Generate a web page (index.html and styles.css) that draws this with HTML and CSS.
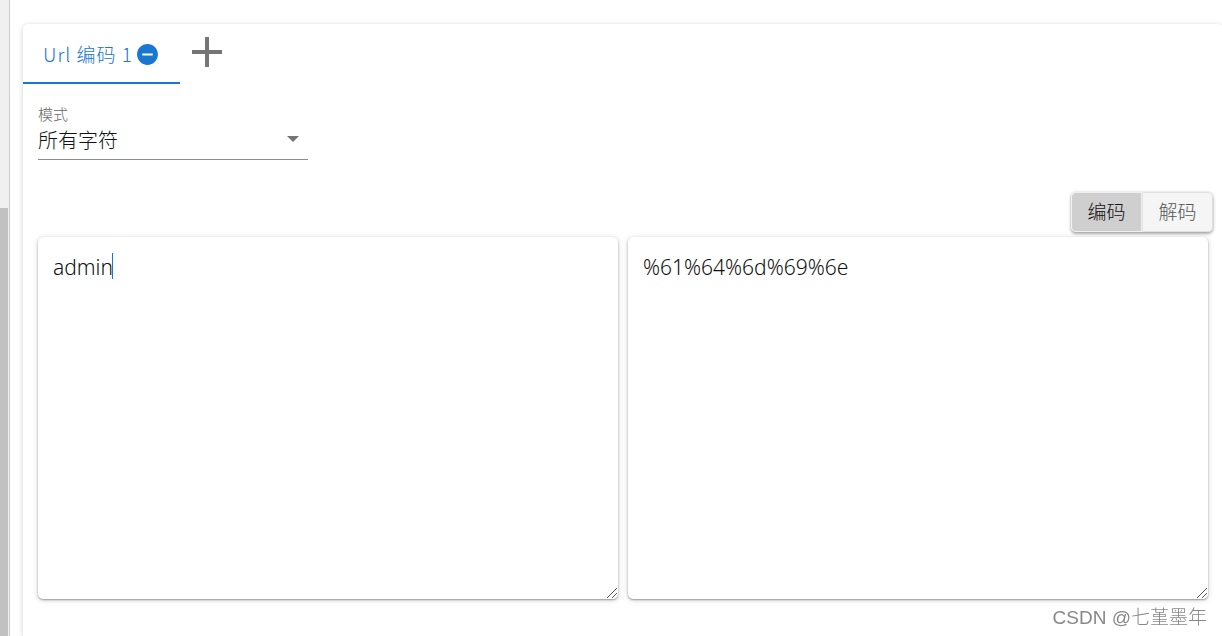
FILE: index.html
```
<!DOCTYPE html>
<html lang="zh-CN">
<head>
    <meta charset="UTF-8">
    <meta name="viewport" content="width=device-width, initial-scale=1.0">
    <title>Url 编码</title>
    <link rel="stylesheet" href="styles.css">
</head>
<body>
    <div class="page">
        <div class="scrollbar">
            <div class="scrollbar-thumb"></div>
        </div>

        <main class="card">
            <!-- Tabs -->
            <div class="tab-bar">
                <div class="tab active">
                    <button type="button" class="tab-label">Url 编码 1</button>
                    <button type="button" class="icon-button" aria-label="关闭">
                        <svg width="25" height="25" viewBox="0 0 24 24"><path fill="#1976d2" d="M12 2C6.48 2 2 6.48 2 12s4.480 10 10 10 10-4.480 10-10S17.520 2 12 2zm5 11H7v-2h10v2z"/></svg>
                    </button>
                </div>
                <button type="button" class="icon-button add-tab" aria-label="添加">
                    <svg width="30" height="30" viewBox="0 0 30 30"><path fill="#757575" d="M13 0h4v13h13v4H17v13h-4V17H0v-4h13z"/></svg>
                </button>
            </div>

            <div class="content">
                <!-- Mode -->
                <div class="field">
                    <label for="mode">模式</label>
                    <div class="select-wrap">
                        <select id="mode" name="mode">
                            <option value="all">所有字符</option>
                        </select>
                        <svg class="arrow" width="12" height="6" viewBox="0 0 12 6"><path fill="#757575" d="M0 0h12L6 6z"/></svg>
                    </div>
                </div>

                <!-- Encode / decode -->
                <div class="toggle-group">
                    <button type="button" class="toggle selected" aria-pressed="true">编码</button>
                    <button type="button" class="toggle" aria-pressed="false">解码</button>
                </div>

                <!-- Input and output -->
                <div class="panels">
                    <div class="panel">
                        <textarea aria-label="输入" spellcheck="false">admin</textarea>
                        <span class="caret"></span>
                        <svg class="grip" width="10" height="10" viewBox="0 0 10 10"><path stroke="#555" d="M0 10L10 0M5 10l5-5"/></svg>
                    </div>
                    <div class="panel">
                        <textarea aria-label="输出" spellcheck="false" readonly>%61%64%6d%69%6e</textarea>
                        <svg class="grip" width="10" height="10" viewBox="0 0 10 10"><path stroke="#555" d="M0 10L10 0M5 10l5-5"/></svg>
                    </div>
                </div>
            </div>
        </main>
    </div>
    <div class="watermark">CSDN @七堇墨年</div>
</body>
</html>
```
FILE: styles.css
```
* { box-sizing: border-box; }
body { margin: 0; overflow: hidden; background-color: #fff; color: #111; font-family: "Noto Sans", "Noto Sans CJK SC", sans-serif; font-weight: 300; }
button, select, textarea { margin: 0; padding: 0; border: none; background: none; color: inherit; font: inherit; }
button { cursor: pointer; }
svg { display: block; }

.page { display: flex; height: 100vh; }
.scrollbar { width: 10px; padding-right: 1px; padding-top: 208px; flex-shrink: 0; background-color: #f0f0f0; border-right: 1px solid #ccc; }
.scrollbar-thumb { width: 8px; height: 100%; background-color: #c1c1c1; }

.card { flex: 1; margin: 24px 0 0 13px; margin-right: -1px; border-radius: 5px 5px 0 0; background-color: #fff; box-shadow: 0 1px 5px rgba(0, 0, 0, 0.2); }

.tab-bar { display: flex; height: 60px; }
.tab { display: flex; align-items: center; gap: 2px; padding: 2px 20px 0; border-bottom: 2px solid transparent; }
.tab.active { color: #1976d2; border-color: #1976d2; }
.tab-label { font-family: "Noto Sans CJK SC", sans-serif; font-size: 19px; letter-spacing: 1px; line-height: 28px; white-space: nowrap; }
.icon-button { display: flex; align-items: center; }
.add-tab { height: 56px; padding: 0 12px; }

.content { padding: 20px 15px 15px; }
.field { width: 270px; }
.field label { display: block; color: #666; font-size: 15px; line-height: 20px; }
.select-wrap { position: relative; border-bottom: 1px solid #8c8c8c; }
.field select { display: block; width: 100%; height: 35px; padding-bottom: 2px; font-size: 20px; appearance: none; }
.arrow { position: absolute; right: 9px; top: 12px; pointer-events: none; }

.toggle-group { display: flex; width: max-content; margin: 32px -5px 5px auto; border-radius: 5px; box-shadow: 0 2px 3px rgba(0, 0, 0, 0.3), 0 0 3px rgba(0, 0, 0, 0.15); }
.toggle { width: 71px; height: 40px; padding-bottom: 2px; border: 1px solid #e0e0e0; border-radius: 0 5px 5px 0; background-color: #f5f5f5; color: #555; font-size: 19px; }
.toggle.selected { border-color: #f0f0f0; border-radius: 5px 0 0 5px; background-color: #cfcfcf; color: #111; }

.panels { display: grid; grid-template-columns: 1fr 1fr; gap: 10px; }
.panel { position: relative; border-radius: 5px; background-color: #fff; box-shadow: 0 1px 2px rgba(0, 0, 0, 0.35), 0 1px 6px rgba(0, 0, 0, 0.15); }
.panel textarea { display: block; width: 100%; height: 362px; padding: 15px; outline: none; font-size: 21px; font-weight: 350; line-height: 30px; resize: vertical; }
.panel textarea::-webkit-resizer { background: transparent; }
.caret { position: absolute; left: 74px; top: 16px; width: 1px; height: 26px; background-color: #1976d2; }
.grip { position: absolute; right: 1px; bottom: 1px; pointer-events: none; }

.watermark { position: fixed; right: 15px; bottom: 4px; color: #888; font-family: "Liberation Sans", "Noto Sans CJK SC", sans-serif; font-size: 19px; line-height: 28px; }
```
